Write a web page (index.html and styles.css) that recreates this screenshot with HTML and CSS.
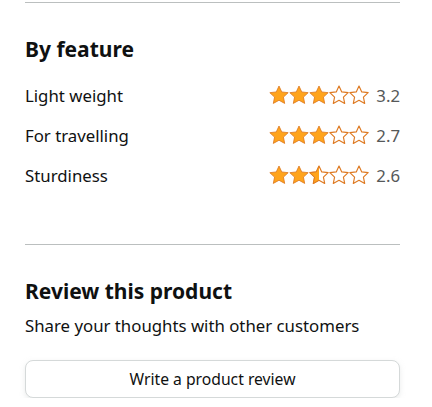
FILE: index.html
```html
<!DOCTYPE html>
<html>
<head>
<meta charset="utf-8">
<link rel="stylesheet" href="styles.css">
</head>
<body>
<div class="page">
  <hr class="rule">
  <section class="features">
    <h2 class="heading">By feature</h2>
    <div class="row">
      <span class="label">Light weight</span>
      <span class="rating">
        <span class="stars">
          <svg class="star" viewBox="0.5 0.5 19 19"><path class="full" d="M10 1.5l2.6 5.6 6.1.7-4.5 4.2 1.2 6L10 15l-5.4 3 1.2-6-4.5-4.2 6.1-.7z"/></svg>
          <svg class="star" viewBox="0.5 0.5 19 19"><path class="full" d="M10 1.5l2.6 5.6 6.1.7-4.5 4.2 1.2 6L10 15l-5.4 3 1.2-6-4.5-4.2 6.1-.7z"/></svg>
          <svg class="star" viewBox="0.5 0.5 19 19"><path class="full" d="M10 1.5l2.6 5.6 6.1.7-4.5 4.2 1.2 6L10 15l-5.4 3 1.2-6-4.5-4.2 6.1-.7z"/></svg>
          <svg class="star" viewBox="0.5 0.5 19 19"><path class="empty" d="M10 1.5l2.6 5.6 6.1.7-4.5 4.2 1.2 6L10 15l-5.4 3 1.2-6-4.5-4.2 6.1-.7z"/></svg>
          <svg class="star" viewBox="0.5 0.5 19 19"><path class="empty" d="M10 1.5l2.6 5.6 6.1.7-4.5 4.2 1.2 6L10 15l-5.4 3 1.2-6-4.5-4.2 6.1-.7z"/></svg>
        </span>
        <span class="score">3.2</span>
      </span>
    </div>
    <div class="row">
      <span class="label">For travelling</span>
      <span class="rating">
        <span class="stars">
          <svg class="star" viewBox="0.5 0.5 19 19"><path class="full" d="M10 1.5l2.6 5.6 6.1.7-4.5 4.2 1.2 6L10 15l-5.4 3 1.2-6-4.5-4.2 6.1-.7z"/></svg>
          <svg class="star" viewBox="0.5 0.5 19 19"><path class="full" d="M10 1.5l2.6 5.6 6.1.7-4.5 4.2 1.2 6L10 15l-5.4 3 1.2-6-4.5-4.2 6.1-.7z"/></svg>
          <svg class="star" viewBox="0.5 0.5 19 19"><path class="full" d="M10 1.5l2.6 5.6 6.1.7-4.5 4.2 1.2 6L10 15l-5.4 3 1.2-6-4.5-4.2 6.1-.7z"/></svg>
          <svg class="star" viewBox="0.5 0.5 19 19"><path class="empty" d="M10 1.5l2.6 5.6 6.1.7-4.5 4.2 1.2 6L10 15l-5.4 3 1.2-6-4.5-4.2 6.1-.7z"/></svg>
          <svg class="star" viewBox="0.5 0.5 19 19"><path class="empty" d="M10 1.5l2.6 5.6 6.1.7-4.5 4.2 1.2 6L10 15l-5.4 3 1.2-6-4.5-4.2 6.1-.7z"/></svg>
        </span>
        <span class="score">2.7</span>
      </span>
    </div>
    <div class="row">
      <span class="label">Sturdiness</span>
      <span class="rating">
        <span class="stars">
          <svg class="star" viewBox="0.5 0.5 19 19"><path class="full" d="M10 1.5l2.6 5.6 6.1.7-4.5 4.2 1.2 6L10 15l-5.4 3 1.2-6-4.5-4.2 6.1-.7z"/></svg>
          <svg class="star" viewBox="0.5 0.5 19 19"><path class="full" d="M10 1.5l2.6 5.6 6.1.7-4.5 4.2 1.2 6L10 15l-5.4 3 1.2-6-4.5-4.2 6.1-.7z"/></svg>
          <svg class="star" viewBox="0.5 0.5 19 19"><defs><clipPath id="halfclip"><rect x="0" y="0" width="10" height="20"/></clipPath></defs><path class="empty" d="M10 1.5l2.6 5.6 6.1.7-4.5 4.2 1.2 6L10 15l-5.4 3 1.2-6-4.5-4.2 6.1-.7z"/><path class="full" clip-path="url(#halfclip)" d="M10 1.5l2.6 5.6 6.1.7-4.5 4.2 1.2 6L10 15l-5.4 3 1.2-6-4.5-4.2 6.1-.7z"/></svg>
          <svg class="star" viewBox="0.5 0.5 19 19"><path class="empty" d="M10 1.5l2.6 5.6 6.1.7-4.5 4.2 1.2 6L10 15l-5.4 3 1.2-6-4.5-4.2 6.1-.7z"/></svg>
          <svg class="star" viewBox="0.5 0.5 19 19"><path class="empty" d="M10 1.5l2.6 5.6 6.1.7-4.5 4.2 1.2 6L10 15l-5.4 3 1.2-6-4.5-4.2 6.1-.7z"/></svg>
        </span>
        <span class="score">2.6</span>
      </span>
    </div>
  </section>
  <hr class="rule">
  <section class="review">
    <h2 class="heading">Review this product</h2>
    <p class="sub">Share your thoughts with other customers</p>
    <button class="btn">Write a product review</button>
  </section>
</div>
</body>
</html>
```

FILE: styles.css
```css
html, body {
  margin: 0;
  padding: 0;
  background: #fff;
}
body {
  font-family: "Noto Sans", "Open Sans", Arial, sans-serif;
  color: #0f1111;
}
.page {
  padding: 2px 32px 0 25px;
}
.rule {
  margin: 0;
  border: 0;
  border-top: 1px solid #bbbfbf;
  height: 0;
}
.heading {
  margin: 0;
  font-size: 21px;
  font-weight: 700;
  line-height: 28px;
}
.features {
  padding: 32px 0 49px;
}
.features .heading {
  margin-bottom: 12px;
}
.row {
  display: flex;
  justify-content: space-between;
  align-items: center;
  height: 40px;
  font-size: 16.8px;
}
.rating {
  display: flex;
  align-items: center;
  gap: 7px;
}
.stars {
  display: flex;
  gap: 0;
}
.star {
  width: 20px;
  height: 20px;
  display: block;
}
.full {
  fill: #ffa41c;
  stroke: #de7921;
  stroke-width: 0.8;
  stroke-linejoin: round;
}
.empty {
  fill: #fff;
  stroke: #de7921;
  stroke-width: 1.1;
  stroke-linejoin: round;
}
.score {
  color: #565959;
  font-size: 16.8px;
}
.review {
  padding: 32px 0 0;
}
.sub {
  margin: 10px 0 23px;
  font-size: 16.8px;
  line-height: 22px;
}
.btn {
  display: block;
  width: 100%;
  height: 38px;
  background: #fff;
  border: 1px solid #d5d9d9;
  border-radius: 8px;
  box-shadow: 0 2px 5px rgba(213, 217, 217, 0.5);
  font-family: inherit;
  font-size: 15.7px;
  color: #0f1111;
}
```
